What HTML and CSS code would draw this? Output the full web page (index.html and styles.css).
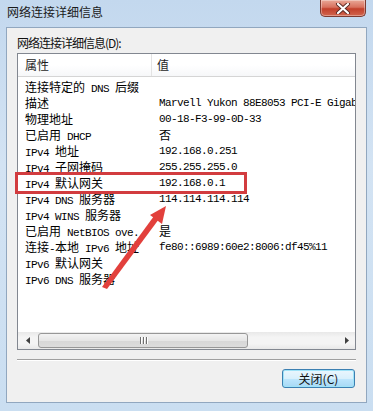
FILE: index.html
```html
<!DOCTYPE html>
<html lang="zh-CN">
<head>
<meta charset="utf-8">
<title>网络连接详细信息</title>
<link rel="stylesheet" href="styles.css">
</head>
<body>
<div class="window">
  <div class="titlebar">
    <span class="title">网络连接详细信息</span>
    <div class="close">
      <svg width="16" height="11" viewBox="0 0 16 11"><path d="M3 1 L13 10 M13 1 L3 10" stroke="#5a2a24" stroke-width="4" stroke-linecap="round"/><path d="M3 1 L13 10 M13 1 L3 10" stroke="#ffffff" stroke-width="2.2" stroke-linecap="round"/></svg>
    </div>
  </div>
  <div class="panel">
    <div class="label">网络连接详细信息(D):</div>
    <div class="list">
      <div class="header">
        <div class="hcell hprop">属性</div>
        <div class="hcell hval">值</div>
      </div>
      <div class="rows">
        <div class="row"><div class="prop">连接特定的<span class="m"> DNS </span>后缀</div><div class="val"></div></div>
        <div class="row"><div class="prop">描述</div><div class="val clip">Marvell Yukon 88E8053 PCI-E Gigabit Ethernet Controller</div></div>
        <div class="row"><div class="prop">物理地址</div><div class="val">00-18-F3-99-0D-33</div></div>
        <div class="row"><div class="prop">已启用<span class="m"> DHCP</span></div><div class="val cj">否</div></div>
        <div class="row"><div class="prop"><span class="m">IPv4 </span>地址</div><div class="val">192.168.0.251</div></div>
        <div class="row"><div class="prop"><span class="m">IPv4 </span>子网掩码</div><div class="val">255.255.255.0</div></div>
        <div class="row"><div class="prop"><span class="m">IPv4 </span>默认网关</div><div class="val">192.168.0.1</div></div>
        <div class="row"><div class="prop"><span class="m">IPv4 DNS </span>服务器</div><div class="val">114.114.114.114</div></div>
        <div class="row"><div class="prop"><span class="m">IPv4 WINS </span>服务器</div><div class="val"></div></div>
        <div class="row"><div class="prop">已启用<span class="m"> NetBIOS ove.</span></div><div class="val cj">是</div></div>
        <div class="row"><div class="prop">连接<span class="m">-</span>本地<span class="m"> IPv6 </span>地址</div><div class="val">fe80::6989:60e2:8006:df45%11</div></div>
        <div class="row"><div class="prop"><span class="m">IPv6 </span>默认网关</div><div class="val"></div></div>
        <div class="row"><div class="prop"><span class="m">IPv6 DNS </span>服务器</div><div class="val"></div></div>
      </div>
      <div class="hscroll">
        <div class="sbtn sleft"><svg width="4" height="7" viewBox="0 0 4 7"><path d="M4 0 L0 3.5 L4 7 Z" fill="#404040"/></svg></div>
        <div class="thumb"><span class="grip"></span><span class="grip"></span><span class="grip"></span></div>
        <div class="strack"></div>
        <div class="sbtn sright"><svg width="4" height="7" viewBox="0 0 4 7"><path d="M0 0 L4 3.5 L0 7 Z" fill="#404040"/></svg></div>
      </div>
    </div>
    <div class="sep"></div>
    <div class="actions">
      <button class="btn">关闭(C)</button>
    </div>
  </div>
  <div class="highlight"></div>
  <svg class="arrow" width="373" height="411" viewBox="0 0 373 411">
    <polygon points="102,287 107,289 159,219 154,216" fill="#e2403c"/>
    <polygon points="166,206 162,224 150,215" fill="#e2403c"/>
  </svg>
</div>
</body>
</html>
```
FILE: styles.css
```css
* { box-sizing: border-box; }
html, body { margin: 0; padding: 0; }
body {
  width: 373px;
  height: 411px;
  overflow: hidden;
  background: #c9dcef;
  font-family: "Noto Sans CJK SC", "Liberation Sans", sans-serif;
}
.window {
  position: relative;
  width: 373px;
  height: 411px;
  background: linear-gradient(180deg, #c3d8ee 0%, #d3e3f3 40%, #cadef1 100%);
  display: flex;
  flex-direction: column;
}
.titlebar {
  height: 27px;
  display: flex;
  justify-content: space-between;
  align-items: flex-start;
  padding-left: 7px;
}
.title {
  font-size: 12px;
  line-height: 12px;
  margin-top: 6px;
  color: #1b1b1b;
}
.close {
  width: 46px;
  height: 17px;
  margin-right: 7px;
  border: 1px solid #7c3a30;
  border-top: none;
  border-radius: 0 0 5px 5px;
  background: linear-gradient(180deg, #e9a897 0%, #d8715e 45%, #c2402b 55%, #d1654e 100%);
  display: flex;
  align-items: center;
  justify-content: center;
  box-shadow: inset 0 0 0 1px rgba(255,255,255,0.35);
}
.panel {
  margin: 0 6px 0 6px;
  height: 376px;
  background: #f0f0f0;
  border: 1px solid #91a7bf;
  padding: 0 10px 0 10px;
  display: flex;
  flex-direction: column;
}
.label {
  padding-top: 9px;
  height: 25px;
  font-size: 12px;
  line-height: 12px;
  letter-spacing: -1px;
  color: #111;
}
.list {
  width: 339px;
  height: 297px;
  border: 1px solid #828790;
  background: #ffffff;
  display: flex;
  flex-direction: column;
}
.header {
  height: 23px;
  display: flex;
  background: linear-gradient(180deg, #ffffff 0%, #ffffff 50%, #f6f7f9 100%);
  border-bottom: 1px solid #d5d5d5;
}
.hcell {
  font-size: 12px;
  line-height: 22px;
  color: #1e1e1e;
}
.hprop {
  width: 134px;
  padding-left: 7px;
  border-right: 1px solid #e3e3e3;
}
.hval { padding-left: 5px; }
.rows {
  flex: 1;
  padding-top: 2px;
}
.row {
  height: 16px;
  display: grid;
  grid-template-columns: 141px 196px;
  align-items: center;
  color: #000;
}
.prop {
  padding-left: 7px;
  font-size: 12px;
  line-height: 16px;
  white-space: nowrap;
}
.val {
  font-family: "Liberation Mono", monospace;
  font-size: 11px;
  letter-spacing: -0.6px;
  line-height: 16px;
  white-space: nowrap;
}
.val.clip {
  overflow-x: clip;
}
.val.cj {
  font-family: "Noto Sans CJK SC", sans-serif;
  font-size: 12px;
  letter-spacing: 0;
}
.m {
  font-family: "Liberation Mono", monospace;
  font-size: 11px;
  letter-spacing: -0.6px;
  line-height: 11px;
}
.hscroll {
  height: 17px;
  display: flex;
  align-items: center;
  background: linear-gradient(180deg, #e8e8e8 0%, #f4f4f4 30%, #f4f4f4 70%, #e8e8e8 100%);
}
.sbtn {
  height: 17px;
  display: flex;
  align-items: center;
  justify-content: center;
}
.sleft { width: 20px; }
.sright { width: 17px; }
.thumb {
  width: 210px;
  height: 15px;
  border: 1px solid #979797;
  border-radius: 3px;
  background: linear-gradient(180deg, #f3f3f3 0%, #e6e6e6 50%, #d7d7d7 51%, #dcdcdc 100%);
  display: flex;
  justify-content: center;
  align-items: center;
  gap: 2px;
}
.grip {
  width: 1px;
  height: 7px;
  background: #6f6f6f;
  box-shadow: 1px 0 0 #ffffff;
}
.strack { flex: 1; }
.sep {
  margin-top: 9px;
  width: 339px;
  height: 2px;
  border-top: 1px solid #a0a0a0;
  border-bottom: 1px solid #ffffff;
}
.actions {
  margin-top: 8px;
  display: flex;
  justify-content: flex-end;
  padding-right: 1px;
}
.btn {
  width: 73px;
  height: 19px;
  padding: 0;
  border: 1px solid #3c7fb1;
  border-radius: 3px;
  background: linear-gradient(180deg, #eaf6fd 0%, #d9f0fc 50%, #bee6fd 51%, #a7d9f5 100%);
  box-shadow: inset 0 0 0 1px #9fe3f8;
  font-family: "Noto Sans CJK SC", sans-serif;
  font-size: 12px;
  line-height: 16px;
  color: #111;
}
.highlight {
  position: absolute;
  left: 15px;
  top: 172px;
  width: 232px;
  height: 22px;
  border: 3px solid #d23c3f;
}
.arrow {
  position: absolute;
  left: 0;
  top: 0;
  pointer-events: none;
}
```
